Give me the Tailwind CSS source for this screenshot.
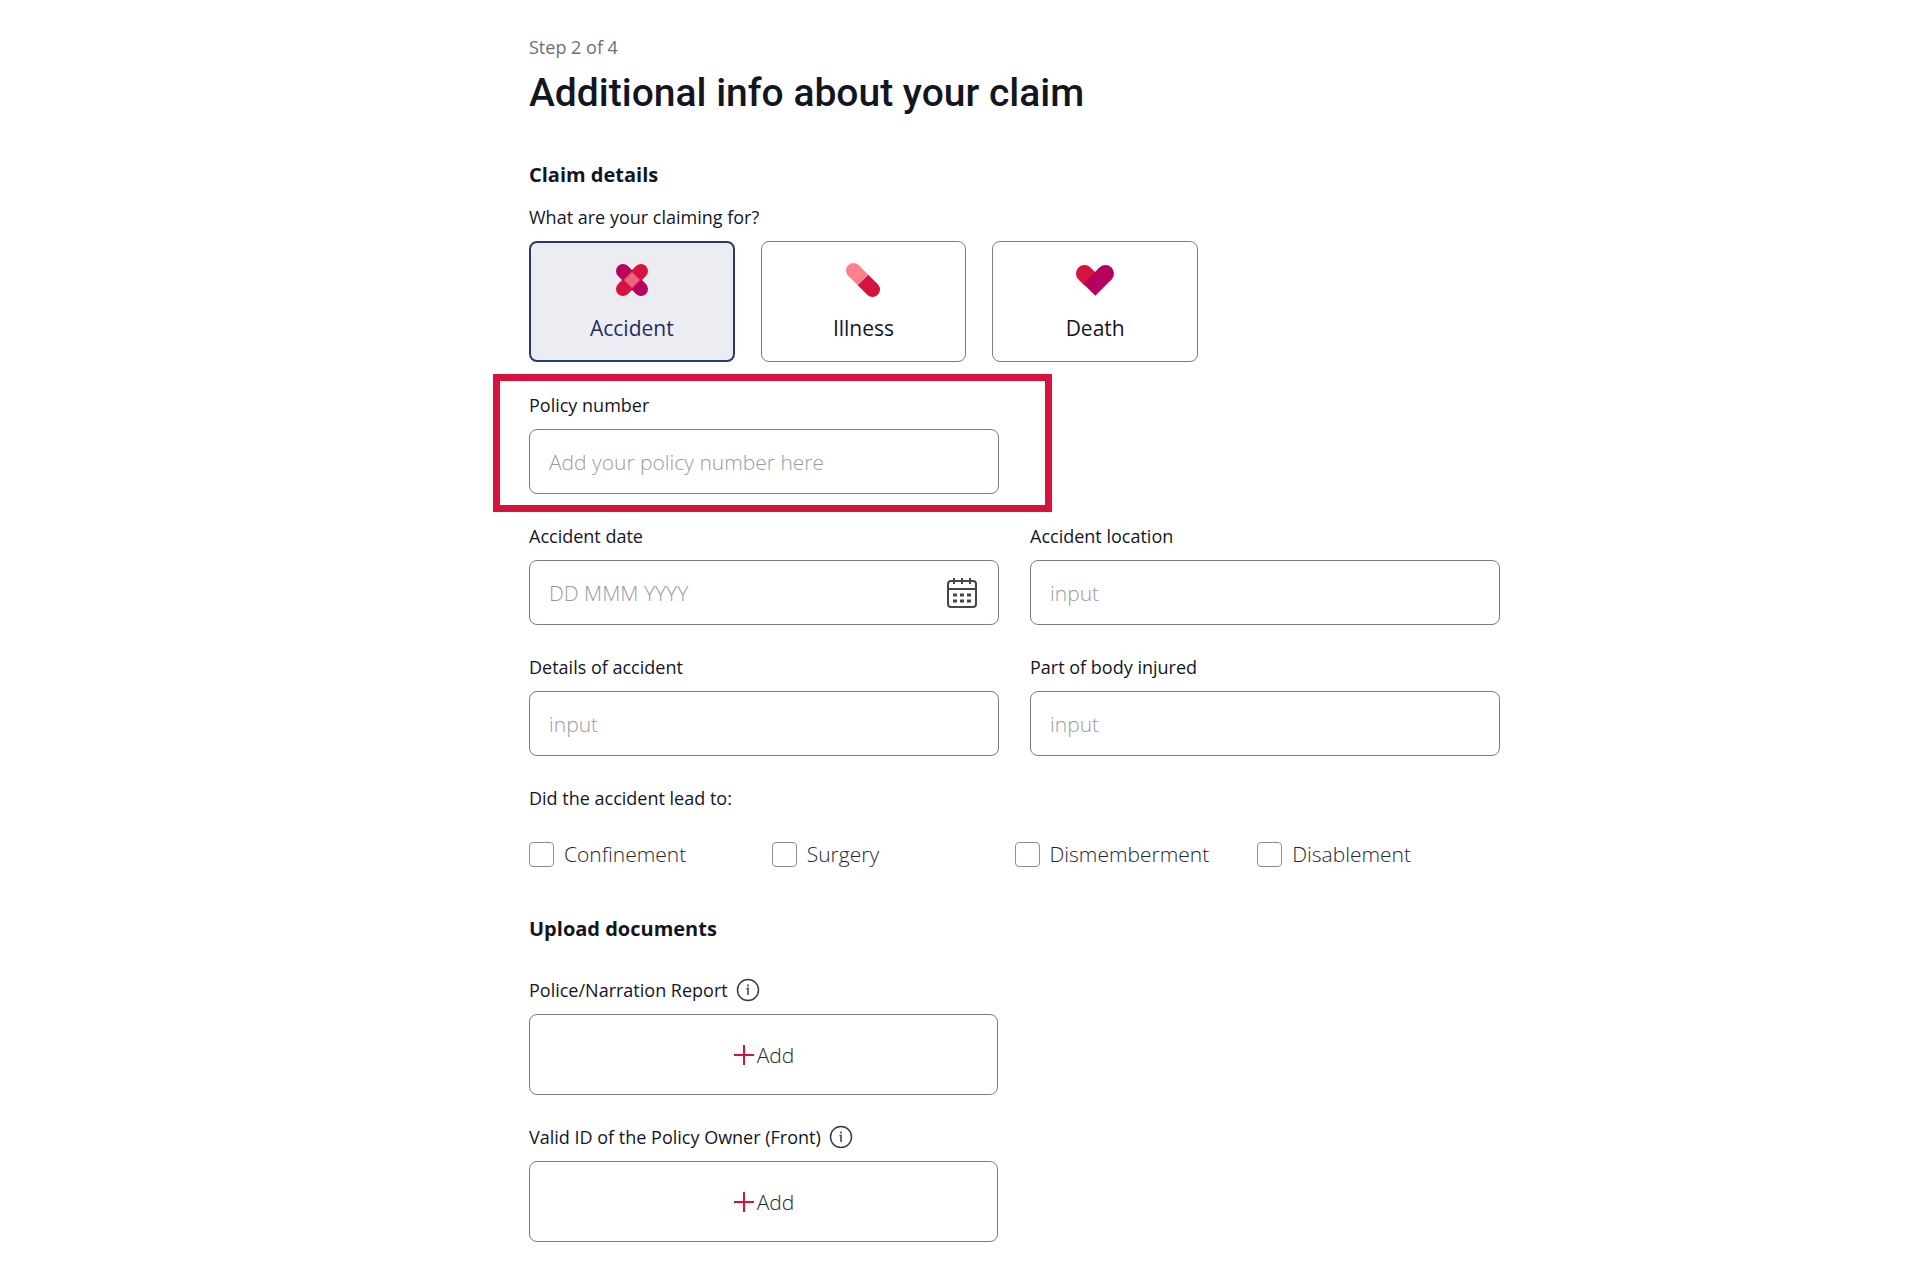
<!DOCTYPE html>
<html lang="en">
  <head>
    <meta charset="UTF-8" />
    <meta name="viewport" content="width=device-width, initial-scale=1.0" />
    <title>Additional info about your claim</title>
    <script src="https://cdn.jsdelivr.net/npm/@tailwindcss/browser@4"></script>
  </head>

  <body class="bg-white min-h-screen font-['Open_Sans','Noto_Sans',sans-serif] text-lg/6 text-[#14161f]">
    <main class="pt-[35px] pb-11 pl-[529px] pr-8">
      <form class="max-w-[971px]">
        <p class="text-[#6b6f78]">Step 2 of 4</p>
        <h1 class="mt-2 text-[39px]/[52px] font-medium font-['Roboto',sans-serif]">
          Additional info about your claim
        </h1>

        <h2 class="mt-[42px] text-xl/7 font-bold">Claim details</h2>
        <p class="mt-4" id="claimType">What are your claiming for?</p>
        <div
          class="mt-3 grid grid-cols-3 gap-[26px] max-w-[669px]"
          role="group"
          aria-labelledby="claimType"
        >
          <button
            type="button"
            aria-pressed="true"
            class="h-[121px] rounded-lg border-2 border-[#2a3a6c] bg-[#ecedf3] text-[#1f2d5f] text-[21px]/7 flex flex-col items-center justify-center gap-4"
          >
            <svg class="w-9 h-9" viewBox="0 0 36 36" xmlns="http://www.w3.org/2000/svg">
              <g stroke-width="14" stroke-linecap="round">
                <path stroke="#b8005f" d="M9 9l18 18" />
                <path stroke="#d6123f" d="M27 9L9 27" />
              </g>
              <path fill="#e8607f" d="M18 10L26 18L18 26L10 18z" />
              <g fill="#d9839a">
                <circle cx="18" cy="15" r="1" />
                <circle cx="15" cy="18" r="1" />
                <circle cx="21" cy="18" r="1" />
                <circle cx="18" cy="21" r="1" />
              </g>
            </svg>
            Accident
          </button>
          <button
            type="button"
            class="h-[121px] rounded-lg border border-[#7c7c80] text-[21px]/7 flex flex-col items-center justify-center gap-4"
          >
            <svg class="w-9 h-9" viewBox="0 0 36 36" xmlns="http://www.w3.org/2000/svg">
              <g transform="rotate(45 18 18)">
                <path fill="#ff7f8c" d="M18 10.500H4.500a7.500 7.500 0 0 0 0 15H18z" />
                <path fill="#d6123f" d="M18 10.500h13.500a7.500 7.500 0 0 1 0 15H18z" />
              </g>
            </svg>
            Illness
          </button>
          <button
            type="button"
            class="h-[121px] rounded-lg border border-[#7c7c80] text-[21px]/7 flex flex-col items-center justify-center gap-4"
          >
            <svg class="w-[38px] h-9" viewBox="0 0 38 36" stroke-width="17" xmlns="http://www.w3.org/2000/svg">
              <path stroke="#d6123f" stroke-linecap="round" d="M8.500 11.500L13.500 16.500" />
              <path stroke="#b8005f" d="M29.500 11.500L13.300 27.700" />
              <circle fill="#b8005f" cx="29.500" cy="11.500" r="8.500" />
            </svg>
            Death
          </button>
        </div>

        <!-- highlighted field -->
        <div
          class="mt-3 -ml-9 max-w-[559px] border-[7px] border-[#d6123f] pt-3 pb-[11px] pl-[29px] pr-[46px]"
        >
          <label for="policy" class="block">Policy number</label>
          <input
            type="text"
            id="policy"
            class="mt-3 block h-[65px] w-full rounded-lg border border-[#7c7c80] px-[19px] text-[21px] font-light placeholder:text-[#9b9b9f] focus:outline-none focus:ring-2 focus:ring-blue-500"
            placeholder="Add your policy number here"
          />
        </div>

        <div class="mt-3 grid grid-cols-2 gap-x-[31px] gap-y-[30px]">
          <div>
            <label for="date" class="block">Accident date</label>
            <div class="relative mt-3">
              <input
                type="text"
                id="date"
                class="block h-[65px] w-full rounded-lg border border-[#7c7c80] pl-[19px] pr-16 text-[21px] font-light placeholder:text-[#9b9b9f] focus:outline-none focus:ring-2 focus:ring-blue-500"
                placeholder="DD MMM YYYY"
              />
              <button type="button" aria-label="Pick a date" class="absolute inset-y-0 right-[21px] flex items-center">
                <svg class="w-8 h-8" viewBox="0 0 32 32" fill="none" stroke="#41464f" stroke-width="2" xmlns="http://www.w3.org/2000/svg">
                  <rect x="2" y="4" width="28" height="26" rx="3" />
                  <path d="M2 12h28M8 1v6M16 1v6M24 1v6" />
                  <path stroke-width="3" d="M7 18h4M14 18h4M21 18h4M7 24h4M14 24h4M21 24h4" />
                </svg>
              </button>
            </div>
          </div>
          <div>
            <label for="location" class="block">Accident location</label>
            <input
              type="text"
              id="location"
              class="mt-3 block h-[65px] w-full rounded-lg border border-[#7c7c80] px-[19px] text-[21px] font-light placeholder:text-[#9b9b9f] focus:outline-none focus:ring-2 focus:ring-blue-500"
              placeholder="input"
            />
          </div>
          <div>
            <label for="details" class="block">Details of accident</label>
            <input
              type="text"
              id="details"
              class="mt-3 block h-[65px] w-full rounded-lg border border-[#7c7c80] px-[19px] text-[21px] font-light placeholder:text-[#9b9b9f] focus:outline-none focus:ring-2 focus:ring-blue-500"
              placeholder="input"
            />
          </div>
          <div>
            <label for="body" class="block">Part of body injured</label>
            <input
              type="text"
              id="body"
              class="mt-3 block h-[65px] w-full rounded-lg border border-[#7c7c80] px-[19px] text-[21px] font-light placeholder:text-[#9b9b9f] focus:outline-none focus:ring-2 focus:ring-blue-500"
              placeholder="input"
            />
          </div>
        </div>

        <fieldset class="mt-[30px]">
          <legend>Did the accident lead to:</legend>
          <div class="mt-8 grid grid-cols-4 text-[21px]/[25px] font-light text-[#26282f]">
            <label class="flex items-center gap-[10px]">
              <input type="checkbox" class="size-[25px] appearance-none rounded border border-[#8f8f94] checked:bg-[#1f2d5f]" />
              Confinement
            </label>
            <label class="flex items-center gap-[10px]">
              <input type="checkbox" class="size-[25px] appearance-none rounded border border-[#8f8f94] checked:bg-[#1f2d5f]" />
              Surgery
            </label>
            <label class="flex items-center gap-[10px]">
              <input type="checkbox" class="size-[25px] appearance-none rounded border border-[#8f8f94] checked:bg-[#1f2d5f]" />
              Dismemberment
            </label>
            <label class="flex items-center gap-[10px]">
              <input type="checkbox" class="size-[25px] appearance-none rounded border border-[#8f8f94] checked:bg-[#1f2d5f]" />
              Disablement
            </label>
          </div>
        </fieldset>

        <h2 class="mt-12 text-xl/7 font-bold">Upload documents</h2>

        <div class="mt-[35px] flex max-w-[469px] flex-col gap-[30px]">
          <div>
            <div class="flex items-center gap-2">
              <span id="police">Police/Narration Report</span>
              <svg class="size-6" viewBox="0 0 24 24" fill="none" stroke="#3a3d45" xmlns="http://www.w3.org/2000/svg">
                <circle cx="12" cy="12" r="10.500" stroke-width="1.500" />
                <path stroke-width="1.500" d="M10.500 10.500H12V17M12 6.500v2" />
              </svg>
            </div>
            <button
              type="button"
              aria-describedby="police"
              class="mt-3 h-[81px] w-full rounded-lg border border-[#7c7c80] flex items-center justify-center gap-[2px] text-[21px] font-light text-[#26282f]"
            >
              <svg class="size-[22px]" viewBox="0 0 22 22" stroke="#d6123f" stroke-width="2" xmlns="http://www.w3.org/2000/svg">
                <path d="M11 1v20M1 11h20" />
              </svg>
              Add
            </button>
          </div>
          <div>
            <div class="flex items-center gap-2">
              <span id="validId">Valid ID of the Policy Owner (Front)</span>
              <svg class="size-6" viewBox="0 0 24 24" fill="none" stroke="#3a3d45" xmlns="http://www.w3.org/2000/svg">
                <circle cx="12" cy="12" r="10.500" stroke-width="1.500" />
                <path stroke-width="1.500" d="M10.500 10.500H12V17M12 6.500v2" />
              </svg>
            </div>
            <button
              type="button"
              aria-describedby="validId"
              class="mt-3 h-[81px] w-full rounded-lg border border-[#7c7c80] flex items-center justify-center gap-[2px] text-[21px] font-light text-[#26282f]"
            >
              <svg class="size-[22px]" viewBox="0 0 22 22" stroke="#d6123f" stroke-width="2" xmlns="http://www.w3.org/2000/svg">
                <path d="M11 1v20M1 11h20" />
              </svg>
              Add
            </button>
          </div>
        </div>
      </form>
    </main>
  </body>
</html>
